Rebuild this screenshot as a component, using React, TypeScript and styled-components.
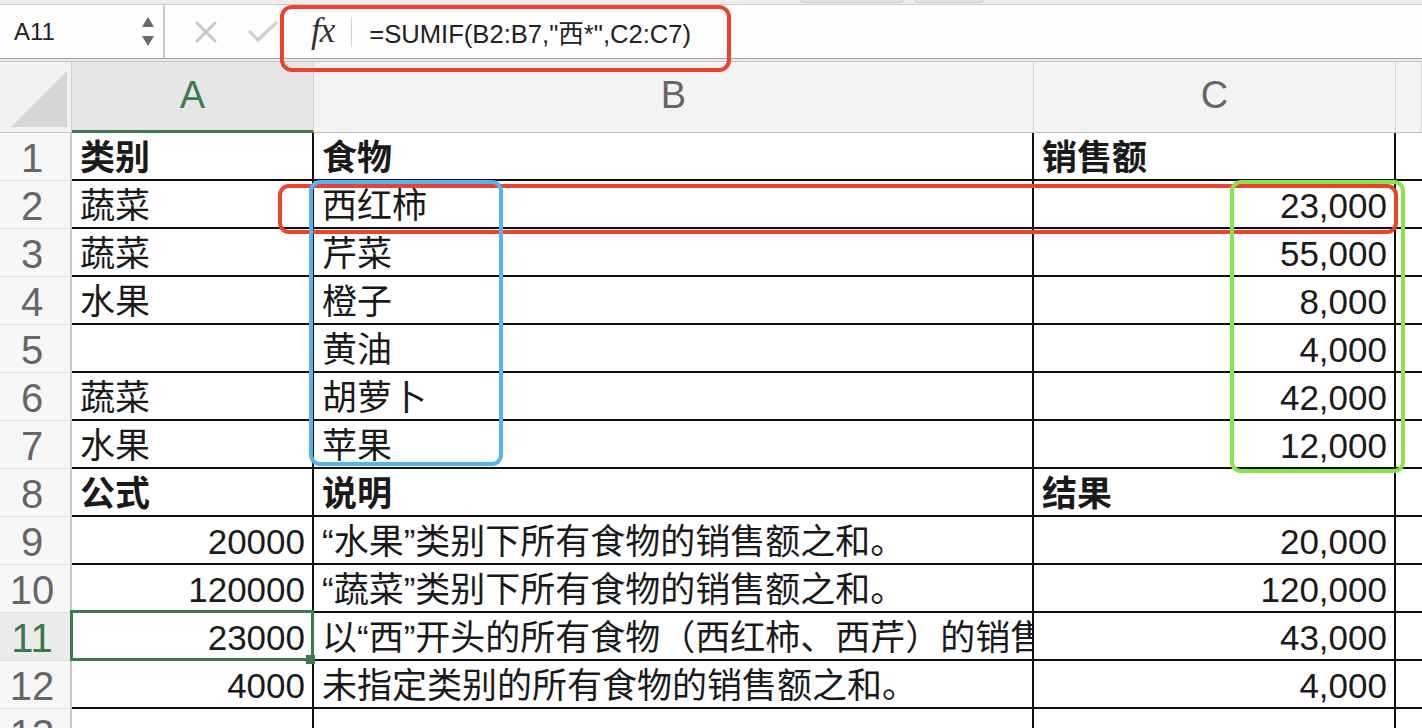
import React from "react";
import styled, { createGlobalStyle } from "styled-components";

const GlobalStyle = createGlobalStyle`
  html, body { margin: 0; padding: 0; background: #ffffff; overflow: hidden; }
  body { font-family: "Liberation Sans", "Noto Sans CJK SC", sans-serif; color: #1a1a1a; }
  * { box-sizing: border-box; }
`;

const COLS = "72px 242px 720px 362px 1fr";

const Page = styled.div`
  position: relative;
  width: 1422px;
  height: 728px;
  overflow: hidden;
  background: #ffffff;
`;

const TopStrip = styled.div`
  height: 5px;
  background: #ececec;
  border-bottom: 1px solid #cdcdcd;
  display: flex;
  gap: 12px;
  padding-left: 800px;
`;

const Tab = styled.div<{ $w: number }>`
  width: ${(p) => p.$w}px;
  height: 3px;
  background: #e3e3e3;
  border: 1px solid #cfcfcf;
  border-top: none;
  border-radius: 0 0 4px 4px;
`;

const FormulaBar = styled.div`
  display: flex;
  height: 53px;
  background: #fdfdfd;
`;

const BarRule = styled.div`
  height: 4px;
  border-top: 1px solid #a3a3a3;
  border-bottom: 1px solid #c4c4c4;
  background: #ebebeb;
`;

const NameBox = styled.div`
  width: 165px;
  display: flex;
  align-items: center;
  justify-content: space-between;
  padding: 0 9px 0 14px;
  border-right: 2px solid #c9c9c9;
  font-size: 24px;
  color: #222;
`;

const Spinner = styled.div`
  display: flex;
  flex-direction: column;
  gap: 9px;
`;

const Tri = styled.div<{ $down?: boolean }>`
  width: 0;
  height: 0;
  border-left: 6px solid transparent;
  border-right: 6px solid transparent;
  ${(p) =>
    p.$down
      ? "border-top: 10px solid #6a6a6a;"
      : "border-bottom: 10px solid #6a6a6a;"}
`;

const EditButtons = styled.div`
  width: 115px;
  display: flex;
  align-items: center;
  padding-left: 29px;
  gap: 30px;
`;

const FormulaZone = styled.div`
  flex: 1;
  display: flex;
  align-items: center;
  padding-left: 31px;
`;

const Fx = styled.span`
  font-family: "Liberation Serif", "DejaVu Serif", serif;
  font-style: italic;
  font-size: 35px;
  color: #333;
  letter-spacing: -1px;
  line-height: 1;
  padding-bottom: 3px;
`;

const FxSep = styled.div`
  width: 1px;
  height: 30px;
  background: #d2d2d2;
  margin: 0 17px 0 17px;
`;

const FormulaText = styled.span`
  font-size: 25.6px;
  color: #222;
`;

const GridRow = styled.div<{ $h: number }>`
  display: grid;
  grid-template-columns: ${COLS};
  height: ${(p) => p.$h}px;
`;

const Corner = styled.div`
  background: #f2f2f2;
  border-right: 1px solid #cfcfcf;
  border-bottom: 1px solid #c0c0c0;
  display: flex;
  align-items: flex-end;
  justify-content: flex-end;
  padding: 0 4px 5px 0;
`;

const ColHead = styled.div<{ $active?: boolean }>`
  background: ${(p) => (p.$active ? "#e6e6e6" : "#f3f3f3")};
  color: ${(p) => (p.$active ? "#3a7a4c" : "#666")};
  border-right: 1px solid #d6d6d6;
  border-bottom: ${(p) => (p.$active ? "3px solid #3d7b4f" : "1px solid #c0c0c0")};
  font-size: 38px;
  display: flex;
  align-items: center;
  justify-content: center;
  padding-bottom: ${(p) => (p.$active ? "2px" : "4px")};
`;

const RowHead = styled.div<{ $active?: boolean }>`
  background: ${(p) => (p.$active ? "#ebebeb" : "#f7f7f7")};
  color: ${(p) => (p.$active ? "#3a7a4c" : "#666")};
  border-right: 2px solid #c8c8c8;
  border-bottom: 1px solid #dcdcdc;
  font-size: 40px;
  line-height: 1.1;
  display: flex;
  align-items: center;
  justify-content: center;
  padding: 3px 6px 0 0;
`;

const Cell = styled.div<{ $right?: boolean; $bold?: boolean; $clip?: boolean }>`
  position: relative;
  border-right: 2px solid #111;
  border-bottom: 2px solid #111;
  padding: 4px 7px 0 8px;
  font-size: 35px;
  line-height: 1.2;
  font-weight: ${(p) => (p.$bold ? 700 : 400)};
  display: flex;
  align-items: center;
  justify-content: ${(p) => (p.$right ? "flex-end" : "flex-start")};
  white-space: nowrap;
  overflow: ${(p) => (p.$clip ? "hidden" : "visible")};
  color: #1a1a1a;
`;

const EndCell = styled.div`
  border-bottom: 2px solid #111;
`;

const Selection = styled.div`
  position: absolute;
  left: -2px;
  top: -3px;
  right: -2px;
  bottom: -2px;
  border: 3px solid #3d7b4f;
  z-index: 2;
  pointer-events: none;
`;

const Handle = styled.div`
  position: absolute;
  right: -3px;
  bottom: -5px;
  width: 9px;
  height: 9px;
  background: #3d7b4f;
  z-index: 3;
`;

const Mark = styled.div<{ $c: string; $x: number; $y: number; $w: number; $h: number; $r?: number }>`
  position: absolute;
  left: ${(p) => p.$x}px;
  top: ${(p) => p.$y}px;
  width: ${(p) => p.$w}px;
  height: ${(p) => p.$h}px;
  border: 4px solid ${(p) => p.$c};
  border-radius: ${(p) => p.$r ?? 11}px;
  pointer-events: none;
  z-index: 5;
`;

type RowData = {
  n: number;
  a: string;
  b: string;
  c: string;
  bold?: boolean;
  aRight?: boolean;
  sel?: boolean;
};

const rows: RowData[] = [
  { n: 1, a: "类别", b: "食物", c: "销售额", bold: true },
  { n: 2, a: "蔬菜", b: "西红柿", c: "23,000" },
  { n: 3, a: "蔬菜", b: "芹菜", c: "55,000" },
  { n: 4, a: "水果", b: "橙子", c: "8,000" },
  { n: 5, a: "", b: "黄油", c: "4,000" },
  { n: 6, a: "蔬菜", b: "胡萝卜", c: "42,000" },
  { n: 7, a: "水果", b: "苹果", c: "12,000" },
  { n: 8, a: "公式", b: "说明", c: "结果", bold: true },
  { n: 9, a: "20000", b: "“水果”类别下所有食物的销售额之和。", c: "20,000", aRight: true },
  { n: 10, a: "120000", b: "“蔬菜”类别下所有食物的销售额之和。", c: "120,000", aRight: true },
  { n: 11, a: "23000", b: "以“西”开头的所有食物（西红柿、西芹）的销售额之和。", c: "43,000", aRight: true, sel: true },
  { n: 12, a: "4000", b: "未指定类别的所有食物的销售额之和。", c: "4,000", aRight: true },
  { n: 13, a: "", b: "", c: "" },
];

const CrossIcon = () => (
  <svg width="24" height="24" viewBox="0 0 24 24">
    <path d="M3 3 L21 21 M21 3 L3 21" stroke="#c8c8c8" strokeWidth="3" strokeLinecap="round" fill="none" />
  </svg>
);

const CheckIcon = () => (
  <svg width="30" height="24" viewBox="0 0 30 24">
    <path d="M2 12 L10 20 L28 3" stroke="#d0d0d0" strokeWidth="3.2" strokeLinecap="round" strokeLinejoin="round" fill="none" />
  </svg>
);

const SelectAll = () => (
  <svg width="56" height="56" viewBox="0 0 56 56">
    <polygon points="56,0 56,56 0,56" fill="#d6d6d6" />
  </svg>
);

export default function App() {
  return (
    <Page>
      <GlobalStyle />
      <TopStrip>
        <Tab $w={103} />
        <Tab $w={68} />
      </TopStrip>
      <FormulaBar>
        <NameBox>
          <span>A11</span>
          <Spinner>
            <Tri />
            <Tri $down />
          </Spinner>
        </NameBox>
        <EditButtons>
          <CrossIcon />
          <CheckIcon />
        </EditButtons>
        <FormulaZone>
          <Fx>fx</Fx>
          <FxSep />
          <FormulaText>=SUMIF(B2:B7,"西*",C2:C7)</FormulaText>
        </FormulaZone>
      </FormulaBar>
      <BarRule />
      <GridRow $h={71}>
        <Corner>
          <SelectAll />
        </Corner>
        <ColHead $active>A</ColHead>
        <ColHead>B</ColHead>
        <ColHead>C</ColHead>
        <ColHead />
      </GridRow>
      {rows.map((r) => (
        <GridRow $h={48} key={r.n}>
          <RowHead $active={r.sel}>{r.n}</RowHead>
          <Cell $bold={r.bold} $right={r.aRight}>
            {r.a}
            {r.sel && (
              <>
                <Selection />
                <Handle />
              </>
            )}
          </Cell>
          <Cell $bold={r.bold} $clip>
            {r.b}
          </Cell>
          <Cell $bold={r.bold} $right={!r.bold}>
            {r.c}
          </Cell>
          <EndCell />
        </GridRow>
      ))}
      <Mark $c="#e9432d" $x={280} $y={5} $w={451} $h={67} $r={12} />
      <Mark $c="#e9432d" $x={278} $y={184} $w={1120} $h={50} />
      <Mark $c="#53b3f3" $x={309} $y={180} $w={194} $h={286} />
      <Mark $c="#88e34b" $x={1230} $y={180} $w={175} $h={293} />
    </Page>
  );
}
